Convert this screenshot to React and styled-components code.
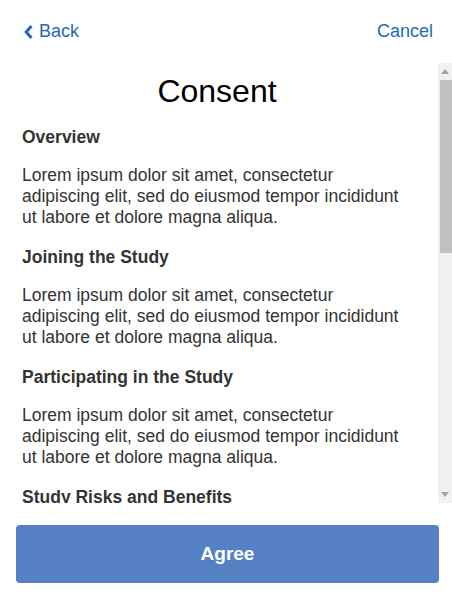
import React from 'react';
import styled, { createGlobalStyle } from 'styled-components';

const GlobalStyle = createGlobalStyle`
  html, body {
    margin: 0;
    padding: 0;
    background: #fff;
    font-family: "Liberation Sans", Arial, sans-serif;
  }
`;

const Page = styled.div`
  display: flex;
  flex-direction: column;
  width: 452px;
  height: 596px;
`;

const TopBar = styled.div`
  display: flex;
  justify-content: space-between;
  align-items: center;
  height: 63px;
  padding: 0 19px 0 24px;
  box-sizing: border-box;
`;

const NavLink = styled.a`
  display: flex;
  align-items: center;
  gap: 6px;
  color: #1f69b8;
  font-size: 18px;
  text-decoration: none;
  cursor: pointer;
`;

const ScrollFrame = styled.div`
  display: flex;
  height: 440px;
`;

const Content = styled.div`
  flex: 1;
  overflow: hidden;
  padding: 10px 26px 0 22px;
  color: #333;
`;

const Track = styled.div`
  display: flex;
  flex-direction: column;
  width: 14px;
  background: #f1f1f1;
`;

const ArrowButton = styled.div`
  display: flex;
  align-items: center;
  justify-content: center;
  height: 17px;
`;

const ThumbArea = styled.div`
  flex: 1;
`;

const Thumb = styled.div`
  margin-left: 2px;
  height: 173px;
  background: #c1c1c1;
`;

const Title = styled.h1`
  margin: 0 0 17px;
  text-align: center;
  font-size: 32px;
  line-height: 37px;
  font-weight: normal;
  color: #000;
`;

const Heading = styled.h2`
  margin: 0 0 17px;
  font-size: 17.5px;
  line-height: 21px;
  font-weight: bold;
  color: #333;
`;

const Body = styled.p`
  margin: 0 0 19px;
  font-size: 17.5px;
  line-height: 21px;
`;

const Footer = styled.div`
  display: flex;
  padding: 22px 13px 13px 16px;
`;

const AgreeButton = styled.button`
  flex: 1;
  height: 58px;
  border: none;
  border-radius: 4px;
  background: #5581c4;
  color: #fff;
  font-family: "Liberation Sans", Arial, sans-serif;
  font-size: 19px;
  font-weight: bold;
  cursor: pointer;
`;

const lorem =
  'Lorem ipsum dolor sit amet, consectetur adipiscing elit, sed do eiusmod tempor incididunt ut labore et dolore magna aliqua.';

const sections = [
  'Overview',
  'Joining the Study',
  'Participating in the Study',
  'Study Risks and Benefits',
  'Data Privacy',
  'Costs and Compensation',
  'Withdrawing from the Study',
  'Contact Information',
];

function Arrow({ down }) {
  return (
    <svg width="8" height="5" viewBox="0 0 8 5">
      <polygon points={down ? '0,0 8,0 4,5' : '0,5 8,5 4,0'} fill="#a3a3a3" />
    </svg>
  );
}

export default function App() {
  return (
    <Page>
      <GlobalStyle />
      <TopBar>
        <NavLink>
          <svg width="9" height="16" viewBox="0 0 9 16">
            <polyline points="7.5,2 2.2,8 7.5,14" fill="none" stroke="#1f69b8" strokeWidth="3" />
          </svg>
          Back
        </NavLink>
        <NavLink>Cancel</NavLink>
      </TopBar>
      <ScrollFrame>
        <Content>
          <Title>Consent</Title>
          {sections.map((s) => (
            <React.Fragment key={s}>
              <Heading>{s}</Heading>
              <Body>{lorem}</Body>
            </React.Fragment>
          ))}
        </Content>
        <Track>
          <ArrowButton><Arrow /></ArrowButton>
          <ThumbArea><Thumb /></ThumbArea>
          <ArrowButton><Arrow down /></ArrowButton>
        </Track>
      </ScrollFrame>
      <Footer>
        <AgreeButton>Agree</AgreeButton>
      </Footer>
    </Page>
  );
}
